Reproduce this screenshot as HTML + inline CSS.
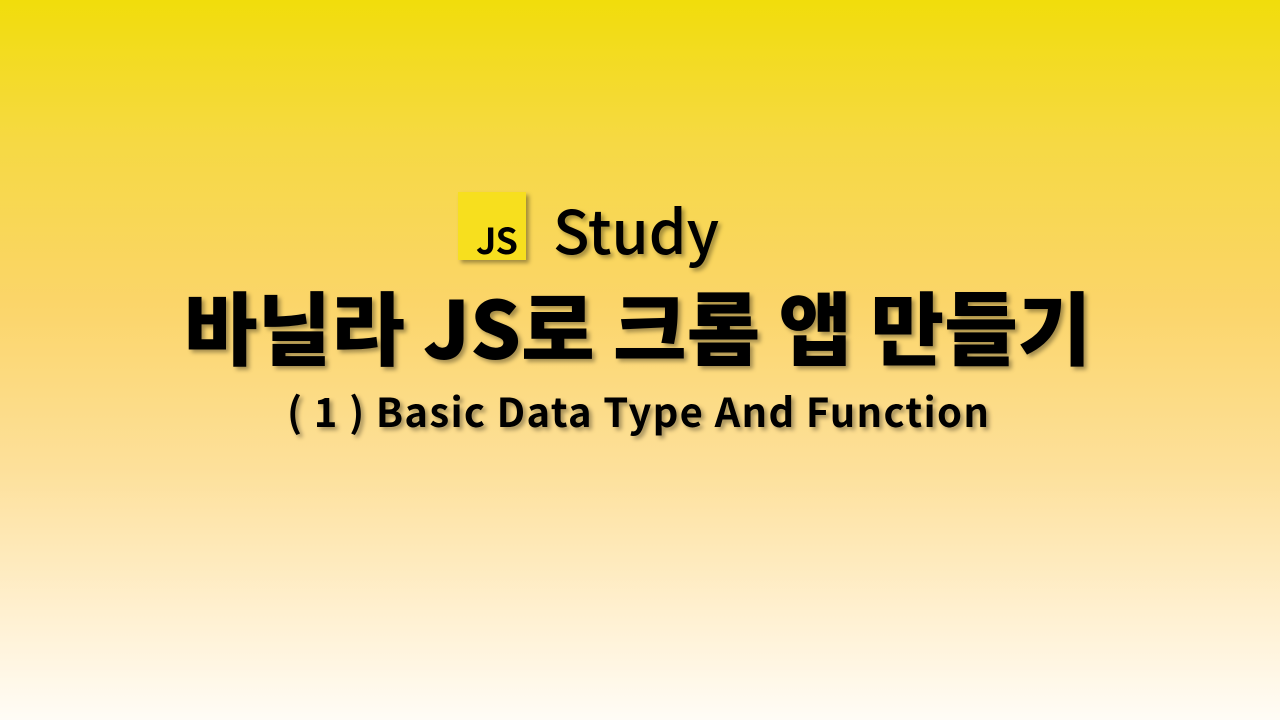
<!DOCTYPE html>
<html><head><meta charset="utf-8"><style>
html,body{margin:0;padding:0}
body{width:1280px;height:720px;overflow:hidden;position:relative;
background:linear-gradient(180deg,#f1dd0b 0%,#f6d944 20%,#fbd569 42%,#fde09a 65%,#fff0d0 85%,#fffcf6 100%);
font-family:"Noto Sans CJK KR","Liberation Sans",sans-serif;color:#000}
.t{position:absolute;white-space:nowrap;text-shadow:3px 3px 4px rgba(0,0,0,.35)}
.js{position:absolute;left:458px;top:192px;width:68px;height:68px;background:#f7df1e;box-shadow:3px 3px 4px rgba(0,0,0,.35)}
.js span{position:absolute;left:18px;top:29px;font:700 36px/1 "Noto Sans CJK KR",sans-serif;letter-spacing:-1px}
</style></head><body>
<div class="js"><span>JS</span></div>
<div class="t" style="left:553px;top:193px;font-size:60px;font-weight:500;line-height:1.2">Study</div>
<div class="t" style="left:184px;top:277px;font-size:80px;font-weight:900;line-height:1.2;letter-spacing:0px">바닐라 JS로 크롬 앱 만들기</div>
<div class="t" style="left:287px;top:386px;font-size:40px;font-weight:700;line-height:1.2;letter-spacing:1.3px">( 1 ) Basic Data Type And Function</div>
</body></html>
